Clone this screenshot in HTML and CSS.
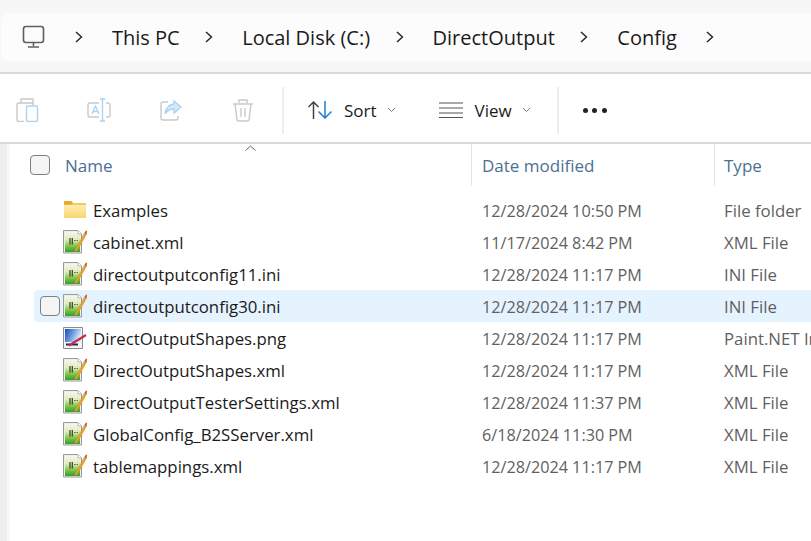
FILE: index.html
```html
<!DOCTYPE html>
<html lang="en">
<head>
    <meta charset="UTF-8">
    <title>Config</title>
    <link rel="stylesheet" href="styles.css">
</head>
<body>

<svg class="defs" width="0" height="0">
    <defs>
        <linearGradient id="xmlGreen" x1="0" y1="0" x2="0" y2="1">
            <stop offset="0" stop-color="#f6f6f0"/>
            <stop offset="0.4" stop-color="#dcebb4"/>
            <stop offset="0.65" stop-color="#8fcb50"/>
            <stop offset="1" stop-color="#2f9e2a"/>
        </linearGradient>
        <linearGradient id="folderBody" x1="0" y1="0" x2="0" y2="1">
            <stop offset="0" stop-color="#fdeeb0"/>
            <stop offset="1" stop-color="#f8d56c"/>
        </linearGradient>
        <linearGradient id="pngSky" x1="0" y1="0" x2="1" y2="0.4">
            <stop offset="0" stop-color="#1c46b4"/>
            <stop offset="0.55" stop-color="#6f9fe4"/>
            <stop offset="1" stop-color="#dbe9fa"/>
        </linearGradient>
    </defs>
    <symbol id="xmlIcon" viewBox="0 0 24 24">
        <path d="M.5.5h14.500l3.500 3.500v19H.5z" fill="#eeeeee" stroke="#9a9a9a"/>
        <path d="M2 2h12.500l2.500 2.500V22H2z" fill="url(#xmlGreen)"/>
        <path d="M15 .5V4h3.500" fill="#fff" stroke="#a8a8a8" stroke-width=".8"/>
        <path d="M7 8v6.500M9.300 8v6.500" stroke="#3a3a3a" stroke-width="1.200"/>
        <path d="M11 10.500h4" stroke="#666" stroke-width="1.200" stroke-dasharray="1.500 1"/>
        <path d="M12 20L21.500 3l2 1.200L14 21l-2.200 1z" fill="#e8ab2e" stroke="#a87718" stroke-width=".4"/>
        <path d="M21.500 3L23 .4l1 .6-.5 3.200z" fill="#b9502c"/>
    </symbol>
</svg>

<div class="address-bar">
    <div class="crumbs">
        <svg class="pc-icon" width="24" height="24" viewBox="0 0 24 24" fill="none" stroke="#5f5f5f" stroke-width="1.600">
            <rect x="1.500" y="1.500" width="20" height="16" rx="2.500"/>
            <path d="M11.500 18v3M6 22h11"/>
        </svg>
        <svg class="chev" width="8" height="12" viewBox="0 0 8 12"><path d="M1 1l5.500 5L1 11" fill="none" stroke="#222" stroke-width="1.400"/></svg>
        <span>This PC</span>
        <svg class="chev" width="8" height="12" viewBox="0 0 8 12"><path d="M1 1l5.500 5L1 11" fill="none" stroke="#222" stroke-width="1.400"/></svg>
        <span>Local Disk (C:)</span>
        <svg class="chev" width="8" height="12" viewBox="0 0 8 12"><path d="M1 1l5.500 5L1 11" fill="none" stroke="#222" stroke-width="1.400"/></svg>
        <span>DirectOutput</span>
        <svg class="chev" width="8" height="12" viewBox="0 0 8 12"><path d="M1 1l5.500 5L1 11" fill="none" stroke="#222" stroke-width="1.400"/></svg>
        <span class="last-crumb">Config</span>
        <svg class="chev" width="8" height="12" viewBox="0 0 8 12"><path d="M1 1l5.500 5L1 11" fill="none" stroke="#222" stroke-width="1.400"/></svg>
    </div>
</div>

<div class="toolbar">
    <div class="tool-icons">
        <svg width="24" height="24" viewBox="0 0 24 24" fill="none">
            <path d="M9 23.500H4q-2 0-2-2V7q0-2 2-2h12q2 0 2 2M6 5V1h12v4z" stroke="#c9c9c9" stroke-width="1.400"/>
            <rect x="11.500" y="8" width="11" height="15.500" rx="1.500" stroke="#a9d2f3" stroke-width="1.400"/>
        </svg>
        <svg width="24" height="24" viewBox="0 0 24 24" fill="none">
            <path d="M12 5H3Q1 5 1 7v10q0 2 2 2h9M19 5h2q2 0 2 2v10q0 2-2 2h-2" stroke="#c9c9c9" stroke-width="1.400"/>
            <path d="M13 1h5M13 23h5M15.500 1v22" stroke="#a9d2f3" stroke-width="1.400"/>
            <path d="M5 16l3.500-8L12 16M6.200 13.500h4.600" stroke="#a9d2f3" stroke-width="1.300"/>
        </svg>
        <svg width="24" height="24" viewBox="0 0 24 24" fill="none">
            <path d="M9 4H4Q2 4 2 6v14q0 2 2 2h13q2 0 2-2v-2" stroke="#c9c9c9" stroke-width="1.400"/>
            <path d="M15 3l7 6-7 6v-4q-6 0-9 5 1-9 9-10z" fill="#d6e9f9" stroke="#a9d2f3" stroke-width="1.300"/>
        </svg>
        <svg width="24" height="24" viewBox="0 0 24 24" fill="none" stroke="#c9c9c9" stroke-width="1.400">
            <path d="M2 6h20M8 5V2h8v3M4 6l2 16q0 1 1.500 1h9q1.500 0 1.500-1l2-16M10 10v9M14 10v9"/>
        </svg>
    </div>
    <div class="tool-sep"></div>
    <div class="tool-btn sort-btn">
        <svg width="24" height="18" viewBox="0 0 24 18" fill="none">
            <path d="M5.500 18V1M.5 6l5-5 5 5" stroke="#444" stroke-width="1.500"/>
            <path d="M17 0v17M10.500 10.500l6.500 6.500 6.500-6.500" stroke="#1a7fd4" stroke-width="1.500"/>
        </svg>
        <span>Sort</span>
        <svg class="caret" width="9" height="6" viewBox="0 0 9 6"><path d="M1 1l3.500 3.500L8 1" fill="none" stroke="#777"/></svg>
    </div>
    <div class="tool-btn view-btn">
        <svg width="24" height="16" viewBox="0 0 24 16" fill="none" stroke="#555" stroke-width="1.200">
            <path d="M0 1h24M0 6h24M0 11h24M0 15.500h24"/>
        </svg>
        <span>View</span>
        <svg class="caret" width="9" height="6" viewBox="0 0 9 6"><path d="M1 1l3.500 3.500L8 1" fill="none" stroke="#777"/></svg>
    </div>
    <div class="tool-sep"></div>
    <div class="more"><i></i><i></i><i></i></div>
</div>

<div class="list">
    <div class="list-head">
        <div class="col-name">
            <div class="check"></div>
            <span>Name</span>
            <svg class="sort-mark" width="11" height="6" viewBox="0 0 11 6"><path d="M.5 5.500L5.500 1l5 4.500" fill="none" stroke="#666"/></svg>
        </div>
        <div class="col-date"><span>Date modified</span></div>
        <div class="col-type"><span>Type</span></div>
    </div>

    <div class="rows">
        <div class="row">
            <div class="col-name">
                <svg class="file-icon" width="24" height="24" viewBox="0 0 24 24">
                    <path d="M1 4q0-1 1-1h6l2 2h12q1 0 1 1v13q0 1-1 1H2q-1 0-1-1z" fill="#f3c95c"/>
                    <path d="M1 7h22v12q0 1-1 1H2q-1 0-1-1z" fill="url(#folderBody)"/>
                    <path d="M1 4q0-1 1-1h6l2 2-2 1.500H1z" fill="#e8a82a"/>
                </svg>
                <span>Examples</span>
            </div>
            <div class="col-date">12/28/2024 10:50 PM</div>
            <div class="col-type">File folder</div>
        </div>
        <div class="row">
            <div class="col-name"><svg class="file-icon" width="24" height="24"><use href="#xmlIcon"/></svg><span>cabinet.xml</span></div>
            <div class="col-date">11/17/2024 8:42 PM</div>
            <div class="col-type">XML File</div>
        </div>
        <div class="row">
            <div class="col-name"><svg class="file-icon" width="24" height="24"><use href="#xmlIcon"/></svg><span>directoutputconfig11.ini</span></div>
            <div class="col-date">12/28/2024 11:17 PM</div>
            <div class="col-type">INI File</div>
        </div>
        <div class="row selected">
            <div class="col-name"><div class="check"></div><svg class="file-icon" width="24" height="24"><use href="#xmlIcon"/></svg><span>directoutputconfig30.ini</span></div>
            <div class="col-date">12/28/2024 11:17 PM</div>
            <div class="col-type">INI File</div>
        </div>
        <div class="row">
            <div class="col-name">
                <svg class="file-icon" width="24" height="24" viewBox="0 0 24 24">
                    <path d="M.5 1.500h19v21H.5z" fill="#f2f4f8" stroke="#8a8a8a"/>
                    <path d="M2 3h16v13H2z" fill="url(#pngSky)"/>
                    <path d="M2 16h16v5H2z" fill="#f4f4f4"/>
                    <path d="M3 18.500h12" stroke="#1d2b4f" stroke-width="2"/>
                    <path d="M6 19.500L23 9" stroke="#c22c44" stroke-width="2.200"/>
                </svg>
                <span>DirectOutputShapes.png</span>
            </div>
            <div class="col-date">12/28/2024 11:17 PM</div>
            <div class="col-type">Paint.NET Image</div>
        </div>
        <div class="row">
            <div class="col-name"><svg class="file-icon" width="24" height="24"><use href="#xmlIcon"/></svg><span>DirectOutputShapes.xml</span></div>
            <div class="col-date">12/28/2024 11:17 PM</div>
            <div class="col-type">XML File</div>
        </div>
        <div class="row">
            <div class="col-name"><svg class="file-icon" width="24" height="24"><use href="#xmlIcon"/></svg><span>DirectOutputTesterSettings.xml</span></div>
            <div class="col-date">12/28/2024 11:37 PM</div>
            <div class="col-type">XML File</div>
        </div>
        <div class="row">
            <div class="col-name"><svg class="file-icon" width="24" height="24"><use href="#xmlIcon"/></svg><span>GlobalConfig_B2SServer.xml</span></div>
            <div class="col-date">6/18/2024 11:30 PM</div>
            <div class="col-type">XML File</div>
        </div>
        <div class="row">
            <div class="col-name"><svg class="file-icon" width="24" height="24"><use href="#xmlIcon"/></svg><span>tablemappings.xml</span></div>
            <div class="col-date">12/28/2024 11:17 PM</div>
            <div class="col-type">XML File</div>
        </div>
    </div>
</div>

</body>
</html>
```

FILE: styles.css
```css
* {
    box-sizing: border-box;
}

html, body {
    height: 100%;
}

body {
    margin: 0;
    overflow: hidden;
    display: flex;
    flex-direction: column;
    font-family: "Open Sans", "Noto Sans", sans-serif;
    background-color: #fff;
    color: #1a1a1a;
}

.defs {
    position: absolute;
}

/* Address bar */
.address-bar {
    height: 74px;
    padding-top: 13px;
    background-color: #f7f7f7;
    border-bottom: 2px solid #d9d9d9;
}

.crumbs {
    height: 48px;
    margin-left: 1px;
    padding-left: 21px;
    display: flex;
    align-items: center;
    background-color: #fcfcfc;
    border-radius: 8px 0 0 8px;
    font-size: 20px;
}

.pc-icon {
    margin-right: 29px;
}

.chev {
    margin-right: 29px;
}

.crumbs span {
    margin-right: 25.5px;
}

.crumbs .last-crumb {
    margin-right: 29px;
}

/* Toolbar */
.toolbar {
    height: 70px;
    padding-top: 4px;
    display: flex;
    align-items: center;
    border-bottom: 2px solid #d9d9d9;
    font-size: 17px;
}

.tool-icons {
    width: 282px;
    padding-left: 15px;
    display: flex;
    gap: 48px;
}

.tool-sep {
    width: 2px;
    height: 47px;
    background-color: #eeeeee;
}

.tool-btn {
    display: flex;
    align-items: center;
}

.tool-btn span {
    margin-left: 12px;
    margin-right: 10px;
}

.sort-btn {
    margin-left: 24px;
    margin-right: 43px;
}

.view-btn {
    margin-right: 26px;
}

.more {
    margin-left: 24px;
    display: flex;
    gap: 4.5px;
}

.more i {
    width: 5px;
    height: 5px;
    border-radius: 50%;
    background-color: #222;
}

/* File list */
.list {
    flex: 1;
    border-left: 7px solid #efefef;
    box-shadow: inset 3px 0 #f8f8f8;
}

.list-head {
    height: 42px;
    display: flex;
    font-size: 17px;
    color: #4d6f94;
}

.list-head > div {
    display: flex;
    align-items: center;
}

.col-name {
    width: 464px;
    padding-left: 23px;
    display: flex;
    align-items: center;
    position: relative;
}

.col-date {
    width: 243px;
    padding-left: 10px;
    border-left: 1px solid #e5e5e5;
}

.col-type {
    flex: 1;
    padding-left: 9px;
    border-left: 1px solid #e5e5e5;
    white-space: nowrap;
    overflow: hidden;
}

.check {
    width: 20px;
    height: 20px;
    border: 1px solid #7f7f7f;
    border-radius: 4px;
    background-color: #f5f5f5;
}

.list-head .check + span {
    margin-left: 15px;
}

.sort-mark {
    position: absolute;
    left: 238px;
    top: 1px;
}

.rows {
    padding-top: 8px;
}

.row {
    height: 32px;
    margin-left: 27px;
    display: flex;
    align-items: center;
}

.row .col-name {
    width: 437px;
    padding-left: 29px;
    font-size: 16.8px;
}

.row .col-date {
    width: 243px;
    padding-left: 11px;
    padding-top: 2px;
    border: 0;
    font-size: 16.2px;
    color: #5f5f5f;
}

.row .col-type {
    padding-left: 10px;
    border: 0;
    font-size: 16.8px;
    color: #5f5f5f;
}

.file-icon {
    flex-shrink: 0;
    margin-right: 6px;
}

.selected {
    background-color: #e5f3ff;
    border-radius: 4px 0 0 4px;
}

.row .check {
    position: absolute;
    left: 6px;
}
```
